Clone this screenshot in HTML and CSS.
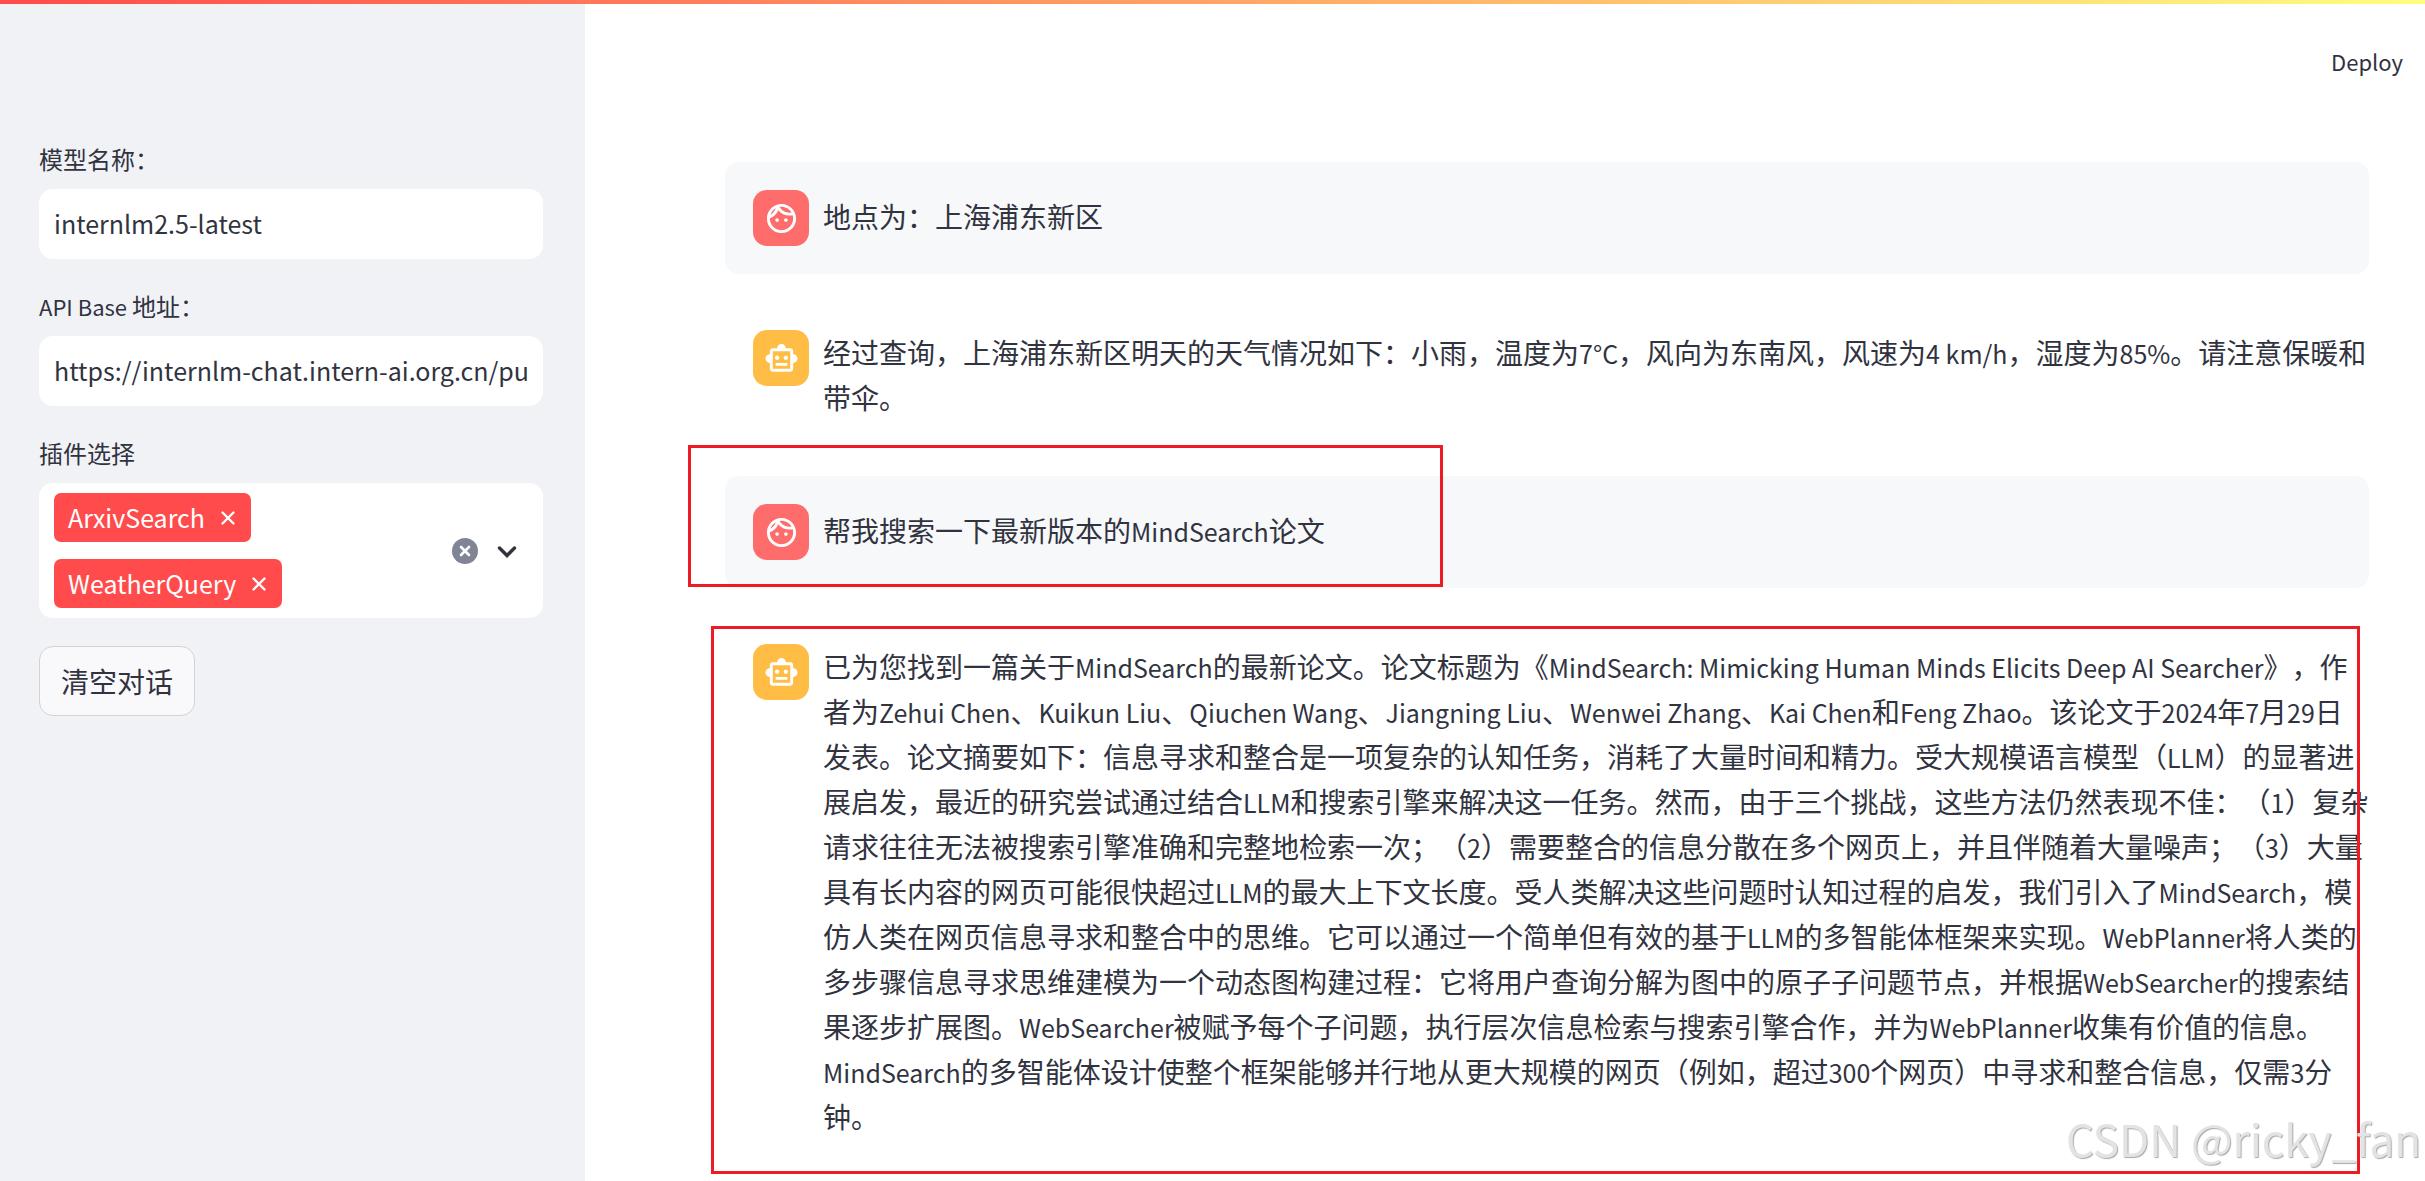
FILE: index.html
```html
<!DOCTYPE html>
<html lang="zh-CN">
<head>
<meta charset="utf-8">
<meta name="viewport" content="width=device-width, initial-scale=1">
<title>MindSearch Chat</title>
<link rel="stylesheet" href="styles.css">
</head>
<body>
<svg class="sprite" aria-hidden="true">
  <symbol id="face" viewBox="0 0 24 24"><path d="M10.25 13c0 .69-.56 1.25-1.25 1.25S7.75 13.69 7.75 13s.56-1.25 1.25-1.25 1.25.56 1.25 1.25zM15 11.75c-.69 0-1.25.56-1.25 1.25s.56 1.25 1.25 1.25 1.25-.56 1.25-1.25-.56-1.25-1.25-1.25zm7 .25c0 5.52-4.48 10-10 10S2 17.52 2 12 6.48 2 12 2s10 4.48 10 10zM10.66 4.12C12.06 6.44 14.6 8 17.5 8c.46 0 .91-.05 1.34-.12C17.44 5.56 14.9 4 12 4c-.46 0-.91.05-1.34.12zM4.42 9.47c1.71-.97 3.03-2.55 3.66-4.44C6.37 6 5.05 7.58 4.42 9.47zM20 12c0-.78-.12-1.53-.33-2.24-.7.15-1.42.24-2.17.24-3.13 0-5.92-1.44-7.76-3.69C8.69 8.87 6.6 10.88 4 11.86c.01.04 0 .09 0 .14 0 4.42 3.58 8 8 8s8-3.58 8-8z"/></symbol>
  <symbol id="robot" viewBox="0 0 24 24"><path d="M20 9V7c0-1.1-.9-2-2-2h-3c0-1.66-1.34-3-3-3S9 3.34 9 5H6c-1.1 0-2 .9-2 2v2c-1.66 0-3 1.34-3 3s1.34 3 3 3v4c0 1.1.9 2 2 2h12c1.1 0 2-.9 2-2v-4c1.66 0 3-1.34 3-3s-1.34-3-3-3zm-2 10H6V7h12v12zm-9-6c-.83 0-1.5-.67-1.5-1.5S8.17 10 9 10s1.5.67 1.5 1.5S9.83 13 9 13zm7.5-1.5c0 .83-.67 1.5-1.5 1.5s-1.5-.67-1.5-1.5.67-1.5 1.5-1.5 1.5.67 1.5 1.5zM8 15h8v2H8v-2z"/></symbol>
  <symbol id="cross" viewBox="0 0 18 18"><path d="M3.500 3.500l11 11M14.500 3.500l-11 11" fill="none" stroke="currentColor" stroke-width="2.4" stroke-linecap="round"/></symbol>
</svg>
<div class="decoration"></div>
<div class="app">
  <aside class="sidebar">
    <div class="field">
      <label class="label" for="model">模型名称：</label>
      <input class="input" id="model" type="text" value="internlm2.5-latest">
    </div>
    <div class="field">
      <label class="label" for="base"><span class="latin">API Base </span>地址：</label>
      <input class="input" id="base" type="text" value="https://internlm-chat.intern-ai.org.cn/pu">
    </div>
    <div class="field" role="group" aria-labelledby="plugins">
      <span class="label" id="plugins">插件选择</span>
      <div class="multiselect">
        <div class="chips">
          <span class="chip">ArxivSearch<button class="chip-remove" type="button" aria-label="ArxivSearch ×"><svg><use href="#cross"/></svg></button></span>
          <span class="chip">WeatherQuery<button class="chip-remove" type="button" aria-label="WeatherQuery ×"><svg><use href="#cross"/></svg></button></span>
        </div>
        <button class="icon-button" type="button" aria-label="Clear all">
          <svg viewBox="0 0 26 26"><circle cx="13" cy="13" r="13" fill="#808495"/><path d="M9 9l8 8M17 9l-8 8" stroke="#fff" stroke-width="2.6" stroke-linecap="round"/></svg>
        </button>
        <button class="icon-button" type="button" aria-label="Open">
          <svg viewBox="0 0 26 26"><path d="M5.500 10l7.500 7.500 7.500-7.500" fill="none" stroke="#31333f" stroke-width="3.4" stroke-linecap="round"/></svg>
        </button>
      </div>
    </div>
    <button class="clear" type="button">清空对话</button>
  </aside>
  <div class="page">
    <header class="toolbar"><button class="deploy" type="button">Deploy</button></header>
    <main class="chat">
      <article class="message user">
        <div class="avatar"><svg><use href="#face"/></svg></div>
        <p class="text">地点为：上海浦东新区</p>
      </article>
      <article class="message bot">
        <div class="avatar"><svg><use href="#robot"/></svg></div>
        <p class="text">经过查询，上海浦东新区明天的天气情况如下：小雨，温度为<span class="latin">7°C</span>，风向为东南风，风速为<span class="latin">4 km/h</span>，湿度为<span class="latin">85%</span>。请注意保暖和带伞。</p>
      </article>
      <article class="message user">
        <div class="avatar"><svg><use href="#face"/></svg></div>
        <p class="text">帮我搜索一下最新版本的<span class="latin">MindSearch</span>论文</p>
        <div class="mark mark-question"></div>
      </article>
      <article class="message bot">
        <div class="avatar"><svg><use href="#robot"/></svg></div>
        <p class="text">已为您找到一篇关于<span class="latin">MindSearch</span>的最新论文。论文标题为《<span class="latin">MindSearch: Mimicking Human Minds Elicits Deep AI Searcher</span>》，作者为<span class="latin">Zehui Chen</span>、<span class="latin">Kuikun Liu</span>、<span class="latin">Qiuchen Wang</span>、<span class="latin">Jiangning Liu</span>、<span class="latin">Wenwei Zhang</span>、<span class="latin">Kai Chen</span>和<span class="latin">Feng Zhao</span>。该论文于<span class="latin">2024</span>年<span class="latin">7</span>月<span class="latin">29</span>日发表。论文摘要如下：信息寻求和整合是一项复杂的认知任务，消耗了大量时间和精力。受大规模语言模型（<span class="latin">LLM</span>）的显著进展启发，最近的研究尝试通过结合<span class="latin">LLM</span>和搜索引擎来解决这一任务。然而，由于三个挑战，这些方法仍然表现不佳：（<span class="latin">1</span>）复杂请求往往无法被搜索引擎准确和完整地检索一次；（<span class="latin">2</span>）需要整合的信息分散在多个网页上，并且伴随着大量噪声；（<span class="latin">3</span>）大量具有长内容的网页可能很快超过<span class="latin">LLM</span>的最大上下文长度。受人类解决这些问题时认知过程的启发，我们引入了<span class="latin">MindSearch</span>，模仿人类在网页信息寻求和整合中的思维。它可以通过一个简单但有效的基于<span class="latin">LLM</span>的多智能体框架来实现。<span class="latin">WebPlanner</span>将人类的多步骤信息寻求思维建模为一个动态图构建过程：它将用户查询分解为图中的原子子问题节点，并根据<span class="latin">WebSearcher</span>的搜索结果逐步扩展图。<span class="latin">WebSearcher</span>被赋予每个子问题，执行层次信息检索与搜索引擎合作，并为<span class="latin">WebPlanner</span>收集有价值的信息。<span class="latin">MindSearch</span>的多智能体设计使整个框架能够并行地从更大规模的网页（例如，超过<span class="latin">300</span>个网页）中寻求和整合信息，仅需<span class="latin">3</span>分钟。</p>
        <div class="mark mark-answer"></div>
      </article>
    </main>
  </div>
</div>
<div class="watermark">CSDN @ricky_fan</div>
</body>
</html>
```
FILE: styles.css
```css
* {
  box-sizing: border-box;
}

body {
  margin: 0;
  background: #fff;
  color: #31333f;
  font-family: "Noto Sans CJK SC", sans-serif;
  font-size: 28px;
  line-height: 45px;
  text-spacing-trim: space-all;
}

button,
input {
  color: inherit;
  font: inherit;
}

button {
  padding: 0;
  border: 0;
  background: none;
  cursor: pointer;
}

svg {
  display: block;
  fill: currentColor;
}

.sprite {
  position: absolute;
  width: 0;
  height: 0;
}

.decoration {
  position: absolute;
  top: 0;
  left: 0;
  right: 0;
  height: 4px;
  background: linear-gradient(90deg, #ff4b4b, #fffd80);
}

.app {
  display: flex;
  min-height: 100vh;
}

/* Latin runs are set smaller so they sit evenly beside the Chinese text */
.latin {
  font-size: 25px;
  line-height: 36px;
}

/* Sidebar */
.sidebar {
  flex: 0 0 585px;
  display: flex;
  flex-direction: column;
  align-items: stretch;
  gap: 28px;
  padding: 140px 42px 28px 39px;
  background: #f0f2f6;
}

.field {
  display: flex;
  flex-direction: column;
  gap: 7px;
}

.label {
  padding-bottom: 4px;
  font-size: 24px;
  line-height: 38px;
}

.label .latin {
  font-size: 22px;
}

.input {
  width: 100%;
  height: 70px;
  padding: 0 13px 2px;
  border: 2px solid #fff;
  border-radius: 14px;
  background: #fff;
  font-size: 25px;
}

.multiselect {
  display: flex;
  align-items: center;
  gap: 16px;
  padding: 10px 23px 10px 15px;
  border-radius: 14px;
  background: #fff;
}

.chips {
  flex: 1;
  display: flex;
  flex-direction: column;
  align-items: flex-start;
  gap: 17px;
}

.chip {
  display: flex;
  align-items: center;
  gap: 14px;
  height: 49px;
  padding: 0 14px;
  border-radius: 7px;
  background: #ff4b4b;
  color: #fff;
  font-size: 25px;
}

.chip-remove svg {
  width: 18px;
  height: 18px;
}

.icon-button svg {
  width: 26px;
  height: 26px;
}

.clear {
  align-self: flex-start;
  height: 70px;
  padding: 0 21px;
  border: 1px solid #d0d2d6;
  border-radius: 14px;
  background: #f9f9fb;
}

/* Page */
.page {
  flex: 1;
  min-width: 0;
}

.toolbar {
  display: flex;
  justify-content: flex-end;
  padding: 39px 22px 0;
}

.deploy {
  font-size: 22px;
}

.chat {
  display: flex;
  flex-direction: column;
  gap: 28px;
  padding: 78px 56px 0 140px;
}

.message {
  position: relative;
  display: flex;
  align-items: flex-start;
  gap: 14px;
  padding: 28px 0 28px 28px;
  border-radius: 14px;
}

.message.user {
  background: #f7f8fa;
}

.avatar {
  flex: none;
  display: grid;
  place-items: center;
  width: 56px;
  height: 56px;
  border-radius: 14px;
  color: #fff;
}

.avatar svg {
  width: 35px;
  height: 35px;
}

.user .avatar {
  background: #ff6c6c;
}

.bot .avatar {
  background: #ffbd45;
}

.text {
  flex: 1;
  margin: 0;
}

.user .text {
  padding-top: 4px;
}

/* Red annotation frames */
.mark {
  position: absolute;
  border: 3px solid #ed1c24;
  pointer-events: none;
}

.mark-question {
  top: -31px;
  left: -37px;
  width: 755px;
  height: 142px;
}

.mark-answer {
  top: 10px;
  right: 9px;
  bottom: -7px;
  left: -14px;
}

.watermark {
  position: fixed;
  right: 4px;
  bottom: 11px;
  color: #e3e3e3;
  font-size: 44px;
  line-height: 64px;
  text-shadow: 1px 1px 1px #a8a8a8;
}
```
